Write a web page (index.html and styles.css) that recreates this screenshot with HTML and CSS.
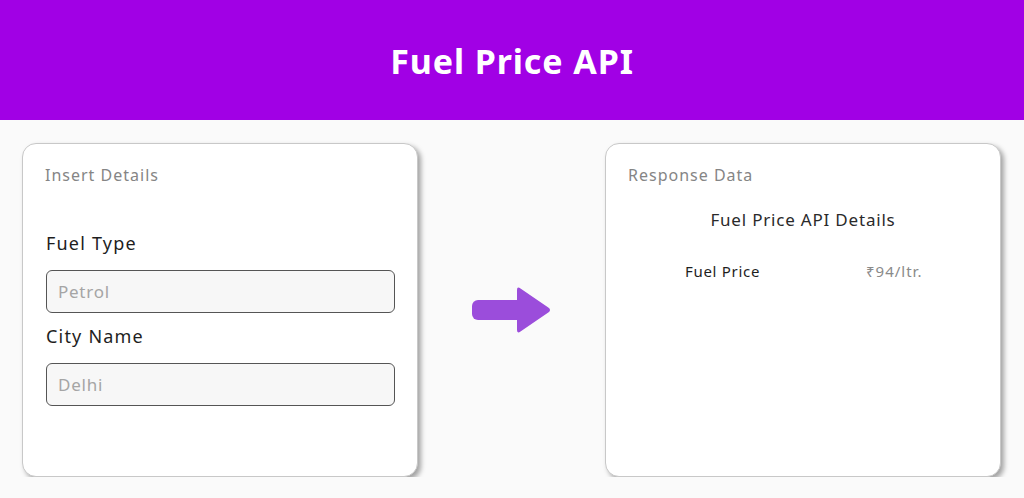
FILE: index.html
```html
<!DOCTYPE html>
<html lang="en">
<head>
    <meta charset="UTF-8">
    <meta name="viewport" content="width=device-width, initial-scale=1.0">
    <title>Fuel Price API</title>
    <link rel="stylesheet" href="styles.css">
</head>
<body>
    <header class="topbar">
        <h1>Fuel Price API</h1>
    </header>
    <main class="panels">
        <section class="card">
            <div class="card-title">Insert Details</div>
            <div class="form">
                <label class="field-label">Fuel Type</label>
                <input class="field" type="text" placeholder="Petrol">
                <label class="field-label">City Name</label>
                <input class="field" type="text" placeholder="Delhi">
            </div>
        </section>
        <div class="arrow">
            <svg width="80" height="48" viewBox="0 0 80 48">
                <rect x="0" y="14" width="52" height="20" rx="6" fill="#9b4ddb"/>
                <path d="M45 4 Q45 0 48.5 2.5 L77 22 Q79 24 77 26 L48.5 45.5 Q45 48 45 44 Z" fill="#9b4ddb"/>
            </svg>
        </div>
        <section class="card">
            <div class="card-title">Response Data</div>
            <div class="result-head">Fuel Price API Details</div>
            <div class="result-row">
                <span class="result-key">Fuel Price</span>
                <span class="result-value">₹94/ltr.</span>
            </div>
        </section>
    </main>
</body>
</html>
```

FILE: styles.css
```css
body {
    margin: 0;
    font-family: "Noto Sans", "Open Sans", sans-serif;
    background: #fafafa;
}
.topbar {
    height: 120px;
    background: #a100e5;
    display: flex;
    align-items: center;
    justify-content: center;
}
.topbar h1 {
    margin: 0 0 -2px;
    color: #fff;
    font-size: 34px;
    font-weight: 700;
    letter-spacing: 0.9px;
}
.panels {
    display: flex;
    justify-content: space-between;
    align-items: center;
    padding: 23px 23px 0 22px;
}
.card {
    width: 396px;
    height: 334px;
    box-sizing: border-box;
    background: #fff;
    border: 1px solid #c8c8c8;
    border-radius: 14px;
    box-shadow: 3px 3px 5px rgba(0, 0, 0, 0.35);
    padding: 20px 22px;
}
.card-title {
    font-size: 16px;
    line-height: 22px;
    color: #858585;
    letter-spacing: 1px;
}
.form {
    display: flex;
    flex-direction: column;
    margin-top: 44px;
}
.field-label {
    font-size: 18px;
    line-height: 27px;
    color: #1e1e1e;
    margin-left: 1px;
    letter-spacing: 1.2px;
}
.field {
    height: 43px;
    box-sizing: border-box;
    margin: 13px 0 10px 1px;
    border: 1px solid #555;
    border-radius: 6px;
    background: #f7f7f7;
    padding: 0 11px;
    font-family: inherit;
    font-size: 17px;
    letter-spacing: 0.75px;
}
.field::placeholder {
    color: #a5a5a5;
}
.arrow {
    display: flex;
    margin-left: 1px;
}
.result-head {
    text-align: center;
    font-size: 17px;
    color: #2a2a2a;
    margin-top: 22px;
    letter-spacing: 0.8px;
}
.result-row {
    display: flex;
    margin-top: 30px;
    font-size: 15px;
    letter-spacing: 0.7px;
}
.result-key {
    color: #1e1e1e;
    margin-left: 57px;
    width: 181px;
}
.result-value {
    color: #8a8a8a;
    letter-spacing: 1px;
}
```
